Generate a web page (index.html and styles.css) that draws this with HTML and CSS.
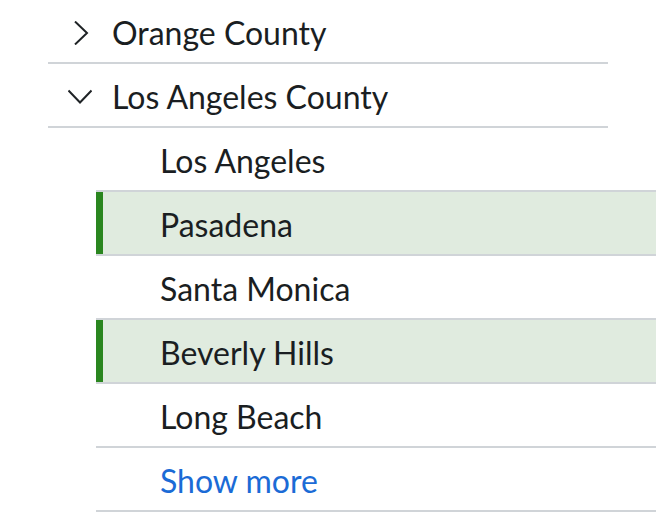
FILE: index.html
```html
<!DOCTYPE html>
<html lang="en">
<head>
<meta charset="utf-8">
<title>Counties</title>
<link rel="stylesheet" href="styles.css">
</head>
<body>
<ul class="tree">
  <li class="county">
    <div class="county-row">
      <svg class="chev" viewBox="0 0 24 24" width="24" height="24" aria-hidden="true"><polyline points="7,0.5 19,12 7,23.5" fill="none" stroke="#1f2326" stroke-width="2"/></svg>
      <span class="label">Orange County</span>
    </div>
  </li>
  <li class="county open">
    <div class="county-row">
      <svg class="chev" viewBox="0 0 24 24" width="24" height="24" aria-hidden="true"><polyline points="0.5,5.5 12,17.5 23.5,5.5" fill="none" stroke="#1f2326" stroke-width="2"/></svg>
      <span class="label">Los Angeles County</span>
    </div>
    <ul class="cities">
      <li class="city">Los Angeles</li>
      <li class="city selected">Pasadena</li>
      <li class="city">Santa Monica</li>
      <li class="city selected">Beverly Hills</li>
      <li class="city">Long Beach</li>
      <li class="city more"><a href="#">Show more</a></li>
    </ul>
  </li>
</ul>
</body>
</html>
```

FILE: styles.css
```css
html, body {
  margin: 0;
  padding: 0;
  overflow: hidden;
  background: #ffffff;
}

body {
  font-family: Lato, "Noto Sans", sans-serif;
  font-size: 32px;
  color: #1a1e22;
}

.tree,
.cities {
  list-style: none;
  margin: 0;
  padding: 0;
}

.tree {
  margin-left: 48px;
  width: 560px;
}

.county-row {
  display: flex;
  align-items: center;
  box-sizing: border-box;
  height: 64px;
  padding-top: 4px;
  border-bottom: 2px solid #d0d4d8;
  padding-left: 20px;
}

.chev {
  flex: none;
  display: block;
  margin-right: 20px;
}

.label {
  line-height: 1;
}

.cities {
  margin-left: 48px;
  width: 560px;
}

.city {
  display: flex;
  align-items: center;
  box-sizing: border-box;
  height: 64px;
  padding-top: 4px;
  padding-left: 64px;
  border-bottom: 2px solid #d0d4d8;
  line-height: 1;
}

.city.selected {
  background: #e0ebdf;
  box-shadow: inset 7px 0 0 #2a861f;
}

.more a {
  color: #1b6bd6;
  text-decoration: none;
}
```
